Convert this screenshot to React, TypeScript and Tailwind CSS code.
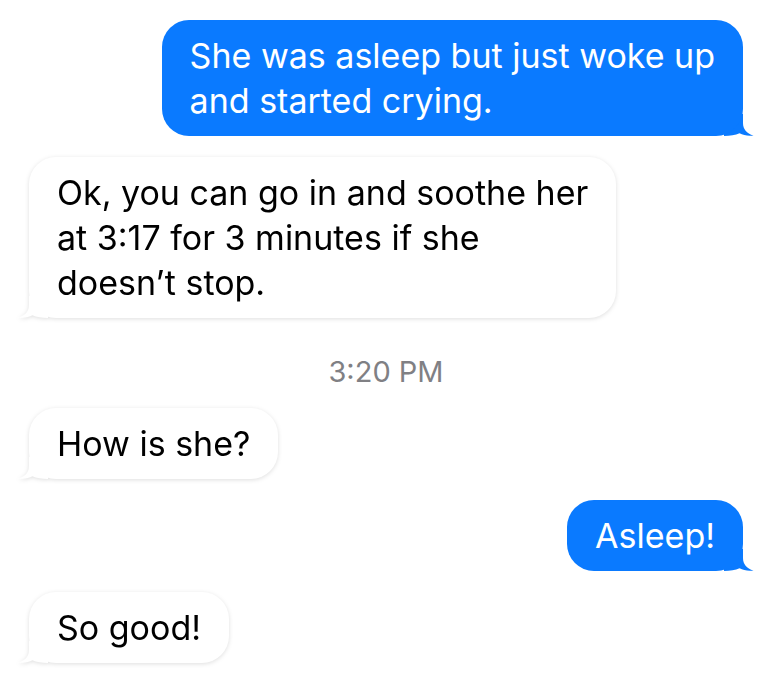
import React from "react";

type Msg =
  | { kind: "out" | "in"; lines: string[] }
  | { kind: "time"; text: string };

const MESSAGES: Msg[] = [
  { kind: "out", lines: ["She was asleep but just woke up", "and started crying."] },
  {
    kind: "in",
    lines: ["Ok, you can go in and soothe her", "at 3:17 for 3 minutes if she", "doesn’t stop."],
  },
  { kind: "time", text: "3:20 PM" },
  { kind: "in", lines: ["How is she?"] },
  { kind: "out", lines: ["Asleep!"] },
  { kind: "in", lines: ["So good!"] },
];

function Tail({ color, flip }: { color: string; flip?: boolean }) {
  return (
    <svg
      width="30"
      height="22"
      viewBox="0 0 30 22"
      className={
        flip
          ? "absolute bottom-0 left-[-11px] -scale-x-100"
          : "absolute bottom-0 right-[-11px]"
      }
    >
      <path
        d="M19 0 L19 9 C19 15 22.5 19.5 29.5 21.5 C24 22.3 19.5 21.3 15.5 19.3 C11.5 21.3 6 22 0 22 L0 0 Z"
        fill={color}
      />
    </svg>
  );
}

function Bubble({ kind, lines }: { kind: "out" | "in"; lines: string[] }) {
  const out = kind === "out";
  return (
    <div className={out ? "flex justify-end" : "flex justify-start"}>
      <div
        className={
          out
            ? "relative"
            : "relative drop-shadow-[0_1px_2px_rgba(0,0,0,0.13)]"
        }
      >
        <Tail color={out ? "#0a7aff" : "#ffffff"} flip={!out} />
        <div
          className={
            out
              ? "relative rounded-[27px] bg-[#0a7aff] px-[28px] py-[13px] text-white"
              : "relative rounded-[27px] bg-white px-[28px] py-[13px] text-black"
          }
        >
          {lines.map((l) => (
            <div key={l} className="whitespace-nowrap">
              {l}
            </div>
          ))}
        </div>
      </div>
    </div>
  );
}

export default function App() {
  return (
    <div className="min-h-screen bg-white font-['Inter','Liberation_Sans',sans-serif] text-[34px] leading-[45px] pl-[29px] pr-[30px] pt-[20px]">
      <div className="flex flex-col">
        <Bubble {...(MESSAGES[0] as { kind: "out"; lines: string[] })} />
        <div className="mt-[21px]">
          <Bubble {...(MESSAGES[1] as { kind: "in"; lines: string[] })} />
        </div>
        <div className="mt-[42px] mb-[24px] text-center text-[29px] leading-[24px] text-[#808084]">
          3:20 PM
        </div>
        <Bubble {...(MESSAGES[3] as { kind: "in"; lines: string[] })} />
        <div className="mt-[21px]">
          <Bubble {...(MESSAGES[4] as { kind: "out"; lines: string[] })} />
        </div>
        <div className="mt-[21px]">
          <Bubble {...(MESSAGES[5] as { kind: "in"; lines: string[] })} />
        </div>
      </div>
    </div>
  );
}
